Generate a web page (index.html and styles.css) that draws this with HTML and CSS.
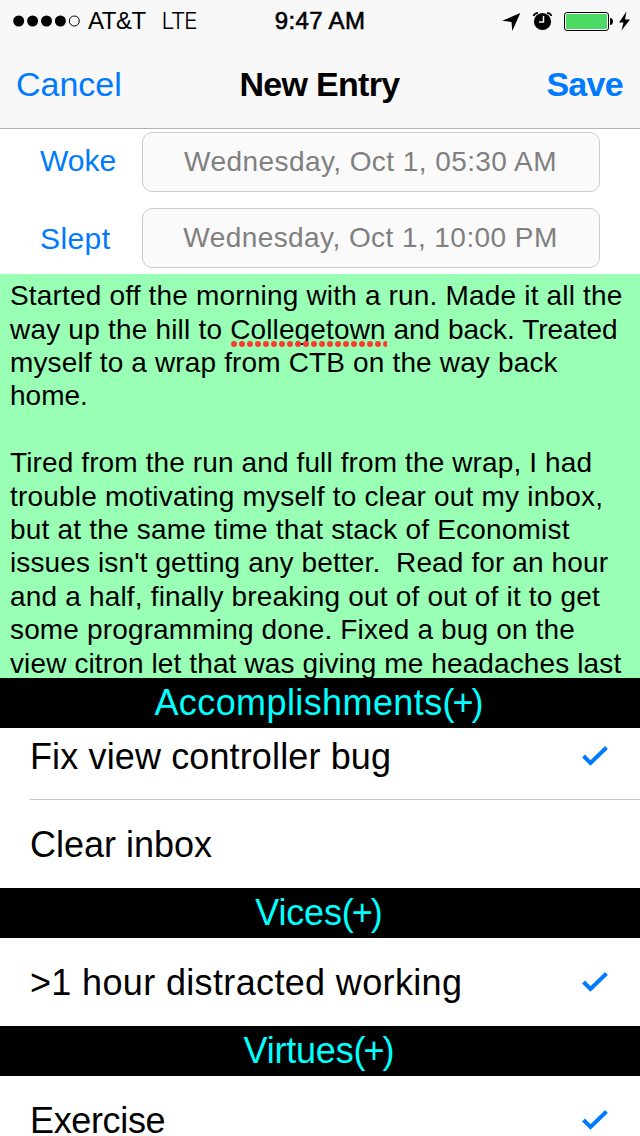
FILE: index.html
```html
<!DOCTYPE html>
<html lang="en">
<head>
<meta charset="utf-8">
<title>New Entry</title>
<link rel="stylesheet" href="styles.css">
</head>
<body>
<div class="screen">
  <header class="top">
    <div class="status">
      <div class="status-left">
        <svg class="signal" width="68" height="12" viewBox="0 0 68 12"><circle cx="5.700" cy="6" r="5.500"/><circle cx="19.600" cy="6" r="5.500"/><circle cx="33.500" cy="6" r="5.500"/><circle cx="47.400" cy="6" r="5.500"/><circle cx="61.300" cy="6" r="5" fill="none" stroke="#000"/></svg>
        <span class="carrier">AT&amp;T</span>
        <span class="network">LTE</span>
      </div>
      <div class="time">9:47 AM</div>
      <div class="status-right">
        <svg class="status-icons" width="140" height="40" viewBox="0 0 140 40">
          <path d="M20.3 12 12.3 30 11.5 21 2.2 19.8Z"/>
          <circle cx="42.5" cy="20.5" r="8.6"/>
          <path d="M33.6 15Q34.2 12.200 38 11.800M51.400 15Q50.800 12.200 47 11.800" fill="none" stroke="#000" stroke-width="1.700"/>
          <path d="M43.500 15v6h-4.500" fill="none" stroke="#f8f8f8" stroke-width="1.500"/>
          <rect x="64.500" y="11.500" width="44" height="18" rx="2.500" fill="#fff" stroke="#000"/>
          <rect x="66" y="13" width="41" height="15" rx="1" fill="#4cd964"/>
          <path d="M110 17c4 0 4 7 0 7Z"/>
          <path d="M126.500 10.500 119 21.500h4.500L121.500 29.500 130 18.500h-5Z"/>
        </svg>
      </div>
    </div>
    <nav class="nav">
      <span class="cancel">Cancel</span>
      <span class="title">New Entry</span>
      <span class="save">Save</span>
    </nav>
  </header>
  <section class="times">
    <div class="row"><span class="label woke">Woke</span><div class="field">Wednesday, Oct 1, 05:30 AM</div></div>
    <div class="row"><span class="label slept">Slept</span><div class="field">Wednesday, Oct 1, 10:00 PM</div></div>
  </section>
  <section class="notes">
    <div class="l1">Started off the morning with a run. Made it all the</div>
    <div class="l2">way up the hill to <span class="misspelled">Collegetown<svg class="dots" width="156" height="6"><defs><pattern id="dot" width="8" height="6" patternUnits="userSpaceOnUse"><circle cx="3" cy="3" r="3" fill="#ff3b30"/></pattern></defs><rect width="156" height="6" fill="url(#dot)"/></svg></span><span class="rest"> and back. Treated</span></div>
    <div class="l3">myself to a wrap from CTB on the way back</div>
    <div class="l4">home.</div>
    <div>&nbsp;</div>
    <div class="l6">Tired from the run and full from the wrap, I had</div>
    <div class="l7">trouble motivating myself to clear out my inbox,</div>
    <div class="l8">but at the same time that stack of Economist</div>
    <div class="l9">issues isn't getting any better.&nbsp; Read for an hour</div>
    <div class="l10">and a half, finally breaking out of out of it to get</div>
    <div class="l11">some programming done. Fixed a bug on the</div>
    <div class="l12">view citron let that was giving me headaches last</div>
  </section>
  <h2 class="section accomplishments">Accomplishments<span class="add">(+)</span></h2>
  <div class="cell scrolled"><span class="fix">Fix view controller bug</span><svg class="check" width="26" height="20" viewBox="0 0 26 20"><path d="M1.500 10 8.500 17 24.500 1.500"/></svg></div>
  <div class="cell"><span class="clear">Clear inbox</span></div>
  <h2 class="section vices">Vices<span class="add">(+)</span></h2>
  <div class="cell"><span class="hour">&gt;1 hour distracted working</span><svg class="check" width="26" height="20" viewBox="0 0 26 20"><path d="M1.500 10 8.500 17 24.500 1.500"/></svg></div>
  <h2 class="section virtues">Virtues<span class="add">(+)</span></h2>
  <div class="cell"><span class="exercise">Exercise</span><svg class="check" width="26" height="20" viewBox="0 0 26 20"><path d="M1.500 10 8.500 17 24.500 1.500"/></svg></div>
</div>
</body>
</html>
```
FILE: styles.css
```css
* { box-sizing: border-box; }
body { margin: 0; background: #fff; font-family: "Liberation Sans", Arial, sans-serif; color: #000; }
.screen { width: 640px; height: 1136px; overflow: hidden; display: flex; flex-direction: column; }
.screen > * { flex: none; }
.top { height: 129px; background: #f8f8f8; border-bottom: 1px solid #b2b2b2; }
.status, .nav { display: grid; grid-template-columns: 1fr auto 1fr; align-items: center; white-space: nowrap; }
.status { height: 40px; font-size: 24px; line-height: 40px; }
.status-left { display: flex; align-items: center; padding-left: 13px; padding-top: 1px; }
.carrier { margin-left: 7px; letter-spacing: -0.5px; }
.network { margin-left: 16px; font-family: Inter, sans-serif; font-weight: 300; font-size: 23px; letter-spacing: -1.5px; }
.time { padding-top: 1px; letter-spacing: 0.35px; -webkit-text-stroke: 0.6px #000; }
.status-right { display: flex; justify-content: flex-end; }
.status-icons { display: block; }
.nav { height: 88px; padding: 0 17px 0 16px; font-size: 34px; line-height: 88px; align-items: start; }
.cancel, .save, .label { color: #007aff; }
.title { font-weight: bold; letter-spacing: -0.7px; }
.save { font-weight: bold; text-align: right; letter-spacing: -0.7px; }
.times { height: 145px; padding: 3px 40px 0; display: flex; flex-direction: column; gap: 16px; }
.row { height: 60px; display: grid; grid-template-columns: 102px 458px; line-height: 58px; }
.label { font-size: 30px; }
.slept { padding-top: 2px; letter-spacing: 0.4px; }
.field { padding-right: 1px; border: 1px solid #ccc; border-radius: 10px; background: #fafafa; color: #808080; font-size: 28px; letter-spacing: 0.43px; text-align: center; white-space: nowrap; }
.notes { height: 404px; overflow: hidden; background: #99ffb4; padding: 5.2px 10px 0; font-size: 28px; line-height: 33.4px; white-space: nowrap; }
.l1, .l10 { letter-spacing: 0.18px; }
.l2, .l7, .l8 { letter-spacing: 0.2px; }
.l3, .l11 { letter-spacing: 0.15px; }
.l6, .l9, .l12 { letter-spacing: 0.12px; }
.rest { letter-spacing: 0; }
.misspelled { position: relative; letter-spacing: 0.13px; }
.dots { position: absolute; left: 1px; bottom: -2px; z-index: 1; }
.section { margin: 0; height: 50px; padding-right: 4px; background: #000; color: #0ff; font-size: 36px; font-weight: 400; line-height: 50px; text-align: center; }
.accomplishments { letter-spacing: 0.4px; }
.vices, .virtues { letter-spacing: -0.2px; }
.add { letter-spacing: -2px; }
.cell { height: 88px; padding: 0 32px 0 30px; display: flex; align-items: center; justify-content: space-between; font-size: 36px; line-height: 28px; }
.cell span { padding-top: 1px; }
.scrolled { height: 72px; padding-bottom: 16px; background: linear-gradient(#c8c7cc, #c8c7cc) 30px 71px / 610px 1px no-repeat; }
.fix { letter-spacing: 0.13px; }
.hour { letter-spacing: 0.35px; }
.exercise { letter-spacing: -0.35px; }
.check { fill: none; stroke: #007aff; stroke-width: 4; }
```
